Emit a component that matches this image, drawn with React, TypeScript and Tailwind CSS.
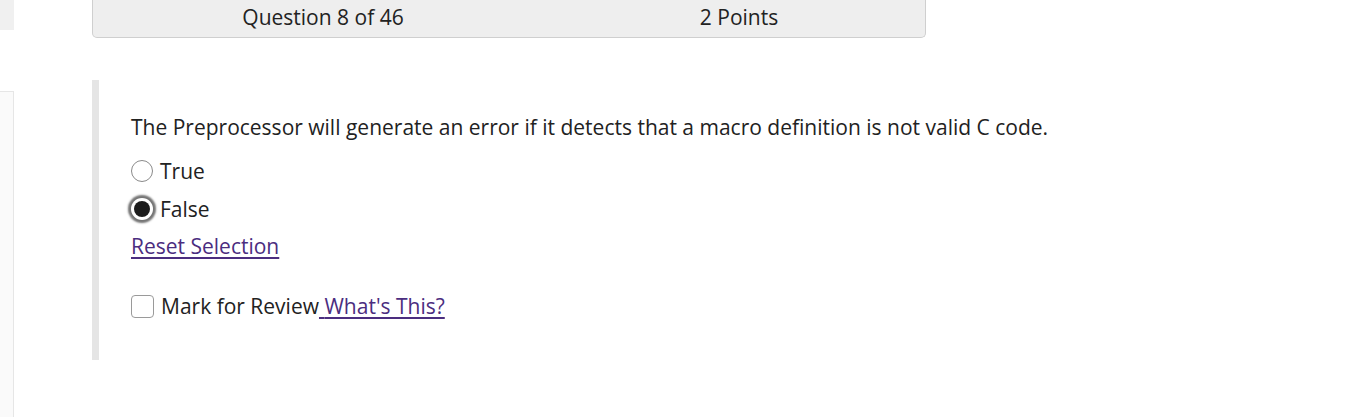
export default function App() {
  return (
    <div className="flex h-[417px] w-full bg-white text-[#222] font-['Open_Sans',sans-serif]">
      <div className="flex w-[14px] flex-col">
        <div className="h-[30px] bg-[#f0f0f0]" />
        <div className="mt-[61px] flex-1 border-t border-r border-[#e6e6e6] bg-[#fafafa]" />
      </div>
      <div className="ml-[78px] flex flex-col">
        <div className="flex h-[38px] w-[834px] items-center rounded-b-[5px] border border-t-0 border-[#cfcfcf] bg-[#eeeeee] text-[21px] pb-[2px]">
          <div className="w-[460px] text-center">Question 8 of 46</div>
          <div className="flex-1 text-center">2 Points</div>
        </div>
        <div className="mt-[42px] flex h-[280px] w-[1000px] flex-col border-l-[7px] border-[#e5e5e5] pl-[32px] pt-[33px] text-[21px] leading-[29px]">
          <p>The Preprocessor will generate an error if it detects that a macro definition is not valid C code.</p>
          <div className="mt-[14px] flex h-[30px] items-center gap-[7px]">
            <span className="h-[22px] w-[22px] rounded-full border border-[#8a8a8a] bg-white" />
            <span>True</span>
          </div>
          <div className="mt-[8px] flex h-[30px] items-center gap-[7px]">
            <span className="flex h-[22px] w-[22px] items-center justify-center rounded-full bg-white shadow-[0_0_2px_3px_rgba(0,0,0,0.55)]">
              <span className="h-[16px] w-[16px] rounded-full bg-[#1c1c1c]" />
            </span>
            <span>False</span>
          </div>
          <a href="#" className="mt-[8px] self-start text-[#4b2d7f] underline decoration-[#4b2d7f] underline-offset-[3px]">
            Reset Selection
          </a>
          <div className="mt-[30px] flex h-[30px] items-center gap-[7px]">
            <span className="h-[23px] w-[23px] rounded-[4px] border border-[#9a9a9a] bg-white" />
            <span>
              Mark for Review
              <a href="#" className="text-[#4b2d7f] underline decoration-[#4b2d7f] underline-offset-[3px]">
                {" "}What's This?
              </a>
            </span>
          </div>
        </div>
      </div>
    </div>
  );
}
